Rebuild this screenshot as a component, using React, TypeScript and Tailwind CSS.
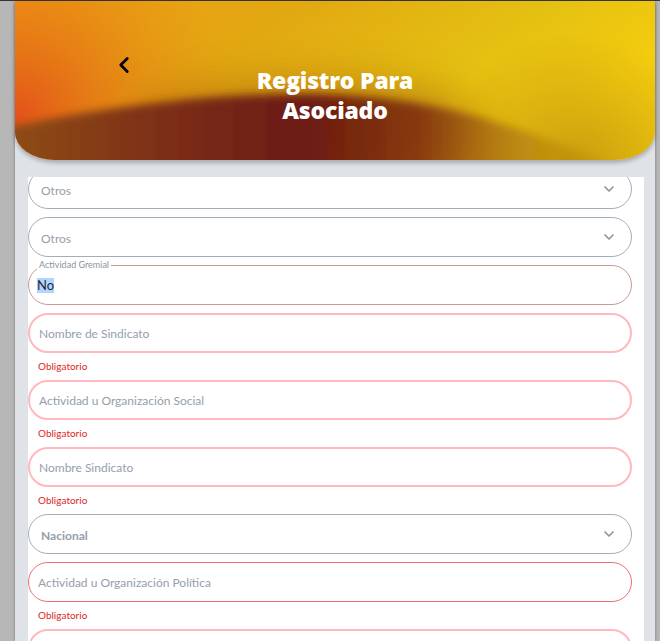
import { ChevronDown, ChevronLeft } from "lucide-react";

const font = { fontFamily: "Lato, 'Open Sans', sans-serif" };
const titleFont = { fontFamily: "'Open Sans', Lato, sans-serif" };

function HeaderArt() {
  return (
    <svg
      className="absolute inset-0"
      width="640"
      height="159"
      viewBox="0 0 640 159"
      preserveAspectRatio="none"
    >
      <defs>
        <linearGradient id="base" x1="0" y1="0" x2="1" y2="0.35">
          <stop offset="0" stopColor="#f09c14" />
          <stop offset="0.4" stopColor="#e2a812" />
          <stop offset="0.75" stopColor="#e4c012" />
          <stop offset="1" stopColor="#f4cd0e" />
        </linearGradient>
        <radialGradient id="redGlow" cx="0" cy="118" r="220" gradientUnits="userSpaceOnUse">
          <stop offset="0" stopColor="#e4501a" stopOpacity="1" />
          <stop offset="0.55" stopColor="#e46c16" stopOpacity="0.4" />
          <stop offset="1" stopColor="#e48a14" stopOpacity="0" />
        </radialGradient>
        <radialGradient id="goldShade" cx="560" cy="170" r="140" gradientUnits="userSpaceOnUse">
          <stop offset="0" stopColor="#b88a10" stopOpacity="0.75" />
          <stop offset="1" stopColor="#b88a10" stopOpacity="0" />
        </radialGradient>
        <linearGradient id="hill" x1="0" y1="0" x2="1" y2="0">
          <stop offset="0" stopColor="#8e4e18" />
          <stop offset="0.22" stopColor="#7e3014" />
          <stop offset="0.45" stopColor="#6c1a12" />
          <stop offset="0.62" stopColor="#7d2c12" stopOpacity="0.85" />
          <stop offset="0.82" stopColor="#a8720f" stopOpacity="0.35" />
          <stop offset="1" stopColor="#c49a10" stopOpacity="0" />
        </linearGradient>
        <filter id="soft" x="-10%" y="-30%" width="120%" height="160%">
          <feGaussianBlur stdDeviation="4" />
        </filter>
        <filter id="halo" x="-20%" y="-60%" width="140%" height="220%">
          <feGaussianBlur stdDeviation="22" />
        </filter>
      </defs>
      <rect width="640" height="159" fill="url(#base)" />
      <rect width="640" height="159" fill="url(#redGlow)" />
      <rect width="640" height="159" fill="url(#goldShade)" />
      <path
        d="M120 110 C 200 80, 330 70, 430 95 C 470 110, 480 140, 420 170 L 150 170 Z"
        fill="#9a4c10"
        opacity="0.5"
        filter="url(#halo)"
      />
      <path
        d="M-10 127 C 80 108, 180 93, 290 93 C 400 94, 470 114, 550 145 L 660 185 L -10 185 Z"
        fill="url(#hill)"
        filter="url(#soft)"
      />
    </svg>
  );
}

function SelectField({ value, bold }: { value: string; bold?: boolean }) {
  return (
    <div className="mb-2 flex h-[40px] items-center justify-between rounded-[20px] border border-[#a4aeba] pl-[12px] pr-[14px]">
      <span className={`pt-[3px] text-[12px] text-[#959eab] ${bold ? "font-bold" : ""}`}>{value}</span>
      <ChevronDown size={16} strokeWidth={2.5} className="text-[#8a95a3]" />
    </div>
  );
}

function TextField({
  placeholder,
  strong,
  error = true,
}: {
  placeholder: string;
  strong?: boolean;
  error?: boolean;
}) {
  return (
    <div className={error ? "" : "mb-2"}>
      <input
        placeholder={placeholder}
        className={`block h-[40px] w-full rounded-[20px] bg-white pl-[9px] text-[12px] text-[#1f2937] outline-none placeholder:text-[#959eab] ${
          strong ? "border border-[#f36b74]" : "border-2 border-[#ffb9be]"
        }`}
        style={font}
      />
      {error && (
        <p className="pb-[7px] pl-[10px] pt-[6px] text-[10px] leading-[14px] text-[#dc2626]">Obligatorio</p>
      )}
    </div>
  );
}

export default function App() {
  return (
    <div className="flex h-[641px] w-full overflow-hidden border-t border-[#333333] bg-[#b7b7b7]" style={font}>
      <div className="ml-[15px] flex w-[640px] flex-col bg-[#dfe3e8] shadow-[0_0_3px_rgba(0,0,0,0.35)]">
        <header className="relative h-[159px] shrink-0 overflow-hidden rounded-b-[40px_28px] shadow-[0_3px_4px_rgba(0,0,0,0.25)]">
          <HeaderArt />
          <button className="absolute left-[96px] top-[51px] text-black">
            <ChevronLeft size={26} strokeWidth={2.6} />
          </button>
          <h1
            className="relative pt-[64px] text-center text-[23px] font-extrabold leading-[30px] tracking-[-0.2px] text-white"
            style={titleFont}
          >
            Registro Para
            <br />
            Asociado
          </h1>
        </header>

        <div className="ml-[13px] mr-[11px] mt-[17px] flex-1 overflow-hidden bg-white pr-3">
          <div className="-mt-[8px] flex flex-col">
            <SelectField value="Otros" />
            <SelectField value="Otros" />

            <div className="relative mb-2 flex h-[40px] items-center rounded-[20px] border-[1.5px] border-[#c79a95] pl-[8px]">
              <span className="absolute -top-[7px] left-[8px] bg-white px-[2px] text-[9px] leading-[12px] text-[#8a94a0]">
                Actividad Gremial
              </span>
              <span className="bg-[#b3d4fc] text-[13px] leading-[15px] text-[#1f2937]">No</span>
            </div>

            <TextField placeholder="Nombre de Sindicato" />
            <TextField placeholder="Actividad u Organización Social" />
            <TextField placeholder="Nombre Sindicato" />
            <SelectField value="Nacional" bold />
            <TextField placeholder="Actividad u Organización Política" strong />
            <TextField placeholder="" error={false} />
          </div>
        </div>
      </div>
    </div>
  );
}
